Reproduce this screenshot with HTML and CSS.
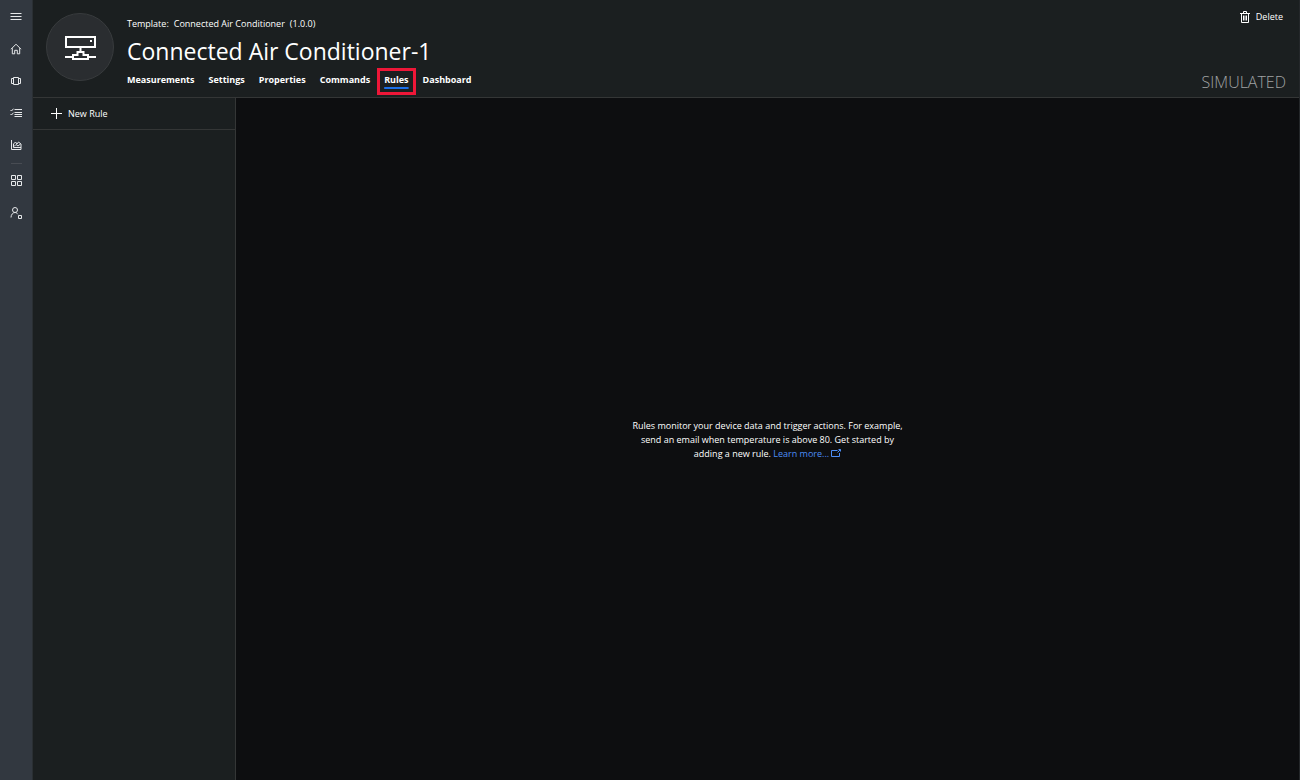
FILE: index.html
```html
<!DOCTYPE html>
<html lang="en">
<head>
<meta charset="utf-8">
<title>Connected Air Conditioner-1</title>
<link rel="stylesheet" href="styles.css">
</head>
<body>
<div class="app">
  <nav class="rail" aria-label="Main">
    <button class="rail-item" aria-label="Menu"><svg class="icon" viewBox="0 0 12 12"><path d="M.5 2.5h11M.5 5.5h11M.5 8.5h11"/></svg></button>
    <button class="rail-item" aria-label="Home"><svg class="icon" viewBox="0 0 12 12"><path d="M1 6.2 6 1.2l5 5M2.3 5.2v5.600h2.400V7.300h2.600v3.500h2.400V5.200"/></svg></button>
    <button class="rail-item" aria-label="Devices"><svg class="icon" viewBox="0 0 12 12"><path d="M3.500 2.500h5v7h-5zM3.500 3.500H1.500v5h2M8.500 3.500h2v5h-2"/></svg></button>
    <button class="rail-item" aria-label="Jobs"><svg class="icon" viewBox="0 0 12 12"><path d="M4.500 2.500H12M4.500 5.500H12M4.500 7.500H12M4.500 9.500H12M.5 3l1 1 2-2.300M.5 7l1 1 2-2.300"/></svg></button>
    <button class="rail-item" aria-label="Analytics"><svg class="icon" viewBox="0 0 12 12"><path d="M1.500 1v9.500H11V5L8.500 3 7 5 5.500 3 3.500 5v3.500H11M4 7.500 6 5.500l2 1.500 2.500-2"/></svg></button>
    <hr class="rail-rule">
    <button class="rail-item" aria-label="Application builder"><svg class="icon" viewBox="0 0 12 12"><path d="M1.500.5h4v4h-4zM7.500.5h4v4h-4zM1.500 6.500h4v4h-4zM7.500 6.500h4v4h-4z"/></svg></button>
    <button class="rail-item" aria-label="Administration"><svg class="icon" viewBox="0 0 12 12"><circle cx="5" cy="3" r="2.500"/><path d="M1 10.500C1 7.500 3 5.500 5 5.500c1.200 0 2 .5 2.700 1.700M8.500 8.500h3v3h-3z"/></svg></button>
  </nav>
  <div class="page">
    <header class="header">
      <div class="avatar"><svg class="device" viewBox="0 0 32 26"><path d="M2 3h29v10H2zM1 23h8M24 23h8M9 21h4.500v-3h6v3H24v4H9zM16.500 13v5"/><path class="device-dot" d="M26 6h2v2h-2z"/></svg></div>
      <div class="heading">
        <p class="template"><span>Template:</span><span>Connected Air Conditioner</span><span>(1.0.0)</span></p>
        <h1 class="title">Connected Air Conditioner-1</h1>
        <nav class="tabs" aria-label="Device">
          <a class="tab" href="#">Measurements</a>
          <a class="tab" href="#">Settings</a>
          <a class="tab" href="#">Properties</a>
          <a class="tab" href="#">Commands</a>
          <a class="tab tab-active" href="#" aria-current="page">Rules</a>
          <a class="tab" href="#">Dashboard</a>
        </nav>
      </div>
      <div class="actions">
        <button class="delete"><svg class="trash" viewBox="0 0 10 12"><path d="M0 2.500h10M3.500 2V.5h3V2M1.500 3v8.500h7V3M3.500 4.500v5M5 4.500v5M6.500 4.500v5"/></svg>Delete</button>
        <span class="status">SIMULATED</span>
      </div>
    </header>
    <div class="content">
      <aside class="rules">
        <button class="new-rule"><svg class="plus" viewBox="0 0 11 11"><path d="M5.500 0v11M0 5.500h11"/></svg>New Rule</button>
      </aside>
      <main class="empty">
        <p class="message">Rules monitor your device data and trigger actions. For example, send an email when temperature is above 80. Get started by adding a new rule. <a class="learn" href="#">Learn more...<svg class="external" viewBox="0 0 10 8"><path d="M6.500 1.500h-6v6h8V4M6.500 3.500l3-3M7.500.5h2v2"/></svg></a></p>
      </main>
    </div>
  </div>
</div>
</body>
</html>
```
FILE: styles.css
```css
* { box-sizing: border-box; }
body {
  margin: 0;
  background: #0d0e10;
  color: #fff;
  font: 9px/14px "Open Sans", "Noto Sans", sans-serif;
}
h1, p { margin: 0; font-weight: 400; }
a { color: inherit; text-decoration: none; }
button {
  padding: 0;
  border: 0;
  background: none;
  color: inherit;
  font: inherit;
  cursor: pointer;
}
svg { fill: none; stroke: #fff; display: block; flex: none; }

.app { display: flex; min-height: 100vh; }
.rail {
  width: 33px;
  flex: none;
  display: flex;
  flex-direction: column;
  padding-top: 1px;
  background: #323840;
  border-right: 1px solid #2a2f33;
}
.rail-item { height: 32px; display: grid; place-items: center; }
.icon { width: 12px; height: 12px; stroke: #e6e8ea; }
.rail-rule { width: 11px; height: 1px; margin: 2px auto 1px; border: 0; background: #484c53; }

.page { flex: 1; min-width: 0; display: flex; flex-direction: column; border-right: 1px solid #24272a; }
.header {
  display: flex;
  background: #1b1f20;
  border-bottom: 1px solid #343636;
  padding: 8px 13px 0 13px;
}
.avatar {
  width: 68px;
  height: 68px;
  flex: none;
  margin-top: 5px;
  display: grid;
  place-items: center;
  background: #2a2d30;
  border: 1px solid #383b3d;
  border-radius: 50%;
}
.device { width: 32px; height: 26px; stroke-width: 2; }
.device-dot { fill: #fff; stroke: none; }
.heading { flex: 1; padding: 9px 0 2px 13px; }
.template { display: flex; gap: 5px; }
.title { font-size: 23px; line-height: 32px; margin-top: 4px; }
.tabs { display: flex; align-items: center; margin-top: 1px; }
.tab { padding: 0 7px 3px; font-weight: 700; line-height: 14px; }
.tab:first-child { padding-left: 0; }
.tab-active {
  padding: 2px 4px 5px;
  border: 3px solid #ee1738;
  text-decoration: underline 2px #1b6fe8;
  text-underline-offset: 4px;
}
.actions {
  display: flex;
  flex-direction: column;
  justify-content: space-between;
  align-items: flex-end;
}
.delete { display: flex; align-items: center; gap: 6px; margin-top: 2px; padding-right: 3px; }
.trash { width: 10px; height: 12px; }
.status { color: #a0a3a4; font-size: 16px; line-height: 20px; font-weight: 300; padding-bottom: 5px; }

.content { flex: 1; display: flex; }
.rules { width: 203px; flex: none; background: #1b1f20; border-right: 1px solid #343636; }
.new-rule {
  width: 100%;
  height: 32px;
  display: flex;
  align-items: center;
  gap: 6px;
  padding-left: 18px;
  border-bottom: 1px solid #343636;
}
.plus { width: 11px; height: 11px; }
.empty { flex: 1; display: grid; place-items: center; padding-top: 2px; }
.message { max-width: 280px; text-align: center; }
.learn { color: #4c8df5; }
.external { display: inline-block; width: 10px; height: 8px; margin-left: 2px; stroke: #4c8df5; }
```
